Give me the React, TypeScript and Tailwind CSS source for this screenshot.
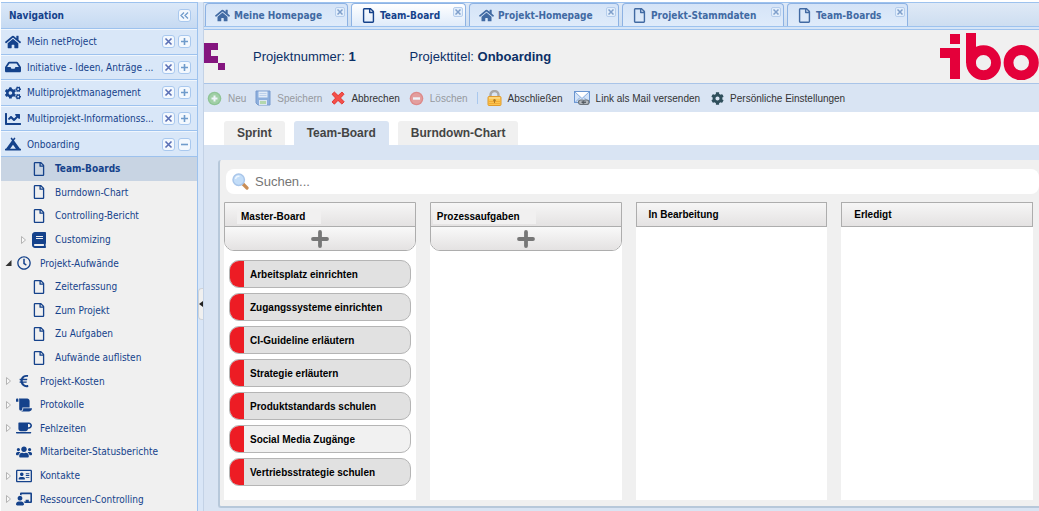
import React from 'react';
import {
  FaHome,
  FaInbox,
  FaCogs,
  FaChartLine,
  FaCampground,
  FaRegFile,
  FaBook,
  FaRegClock,
  FaEuroSign,
  FaScroll,
  FaCoffee,
  FaUsers,
  FaRegAddressCard,
  FaChalkboardTeacher,
  FaCog,
} from 'react-icons/fa';
import clsx from 'clsx';

const sections = [
  { label: 'Mein netProject', icon: FaHome, open: false },
  { label: 'Initiative - Ideen, Anträge ...', icon: FaInbox, open: false },
  { label: 'Multiprojektmanagement', icon: FaCogs, open: false },
  { label: 'Multiprojekt-Informationss...', icon: FaChartLine, open: false },
  { label: 'Onboarding', icon: FaCampground, open: true },
];

const tree = [
  { label: 'Team-Boards', icon: FaRegFile, level: 2, arrow: '' },
  { label: 'Burndown-Chart', icon: FaRegFile, level: 2, arrow: '' },
  { label: 'Controlling-Bericht', icon: FaRegFile, level: 2, arrow: '' },
  { label: 'Customizing', icon: FaBook, level: 2, arrow: 'closed' },
  { label: 'Projekt-Aufwände', icon: FaRegClock, level: 1, arrow: 'open' },
  { label: 'Zeiterfassung', icon: FaRegFile, level: 2, arrow: '' },
  { label: 'Zum Projekt', icon: FaRegFile, level: 2, arrow: '' },
  { label: 'Zu Aufgaben', icon: FaRegFile, level: 2, arrow: '' },
  { label: 'Aufwände auflisten', icon: FaRegFile, level: 2, arrow: '' },
  { label: 'Projekt-Kosten', icon: FaEuroSign, level: 1, arrow: 'closed' },
  { label: 'Protokolle', icon: FaScroll, level: 1, arrow: 'closed' },
  { label: 'Fehlzeiten', icon: FaCoffee, level: 1, arrow: 'closed' },
  { label: 'Mitarbeiter-Statusberichte', icon: FaUsers, level: 1, arrow: '' },
  { label: 'Kontakte', icon: FaRegAddressCard, level: 1, arrow: 'closed' },
  { label: 'Ressourcen-Controlling', icon: FaChalkboardTeacher, level: 1, arrow: 'closed' },
];

const pageTabs = [
  { label: 'Meine Homepage', icon: FaHome, width: 'w-[143px]' },
  { label: 'Team-Board', icon: FaRegFile, width: 'w-[115px]' },
  { label: 'Projekt-Homepage', icon: FaHome, width: 'w-[150px]' },
  { label: 'Projekt-Stammdaten', icon: FaRegFile, width: 'w-[162px]' },
  { label: 'Team-Boards', icon: FaRegFile, width: 'w-[121px]' },
];

const cards = [
  'Arbeitsplatz einrichten',
  'Zugangssysteme einrichten',
  'CI-Guideline erläutern',
  'Strategie erläutern',
  'Produktstandards schulen',
  'Social Media Zugänge',
  'Vertriebsstrategie schulen',
];

const columns = [
  { title: 'Master-Board', canAdd: true, inset: 'pl-3', cards },
  { title: 'Prozessaufgaben', canAdd: true, inset: 'pl-0.5', cards: [] },
  { title: 'In Bearbeitung', canAdd: false, inset: '', cards: [] },
  { title: 'Erledigt', canAdd: false, inset: '', cards: [] },
];

function NeuIcon() {
  return (
    <svg width="15" height="15" viewBox="0 0 15 15" className="opacity-60">
      <circle cx="7.5" cy="7.5" r="6.8" fill="#5fb05a" />
      <circle cx="7.5" cy="7.5" r="5.4" fill="#7cc474" />
      <path d="M7.5 4.5v6M4.5 7.5h6" stroke="#fff" strokeWidth="2" />
    </svg>
  );
}

function SpeichernIcon() {
  return (
    <svg width="16" height="16" viewBox="0 0 16 16" className="opacity-60">
      <path d="M1 1h14v14H3l-2-2z" fill="#5c8cd0" stroke="#3b6db5" />
      <path d="M3.5 1.5h9v6h-9z" fill="#e9f1fb" />
      <path d="M4.5 3.5h7M4.5 5.5h7" stroke="#a9c3e6" />
      <path d="M4 10h8v5H4z" fill="#dfe8f3" />
      <path d="M5 11h6v3H5z" fill="#9ccf7f" />
    </svg>
  );
}

function AbbrechenIcon() {
  return (
    <svg width="14" height="14" viewBox="0 0 14 14">
      <path
        d="M1 3.2 3.4 1l3.7 3.6L11 1l2 2.2L9.5 7l3.7 3.8-2.3 2.3L7 9.4l-3.6 3.8L1 11l3.5-3.9z"
        fill="#f4504a"
        stroke="#e0241f"
        strokeWidth="0.8"
        strokeLinejoin="round"
      />
    </svg>
  );
}

function LoeschenIcon() {
  return (
    <svg width="15" height="15" viewBox="0 0 15 15" className="opacity-60">
      <circle cx="7.5" cy="7.5" r="6.8" fill="#e04f45" />
      <circle cx="7.5" cy="7.5" r="5.4" fill="#ea7166" />
      <path d="M4 7.5h7" stroke="#fff" strokeWidth="2.4" />
    </svg>
  );
}

function LockIcon() {
  return (
    <svg width="15" height="16" viewBox="0 0 15 16">
      <path d="M3.5 8V5a4 4 0 0 1 8 0v3" fill="none" stroke="#a8a8a8" strokeWidth="2.4" />
      <rect x="1" y="6.5" width="13" height="9" rx="1" fill="#fbc550" stroke="#e09a2b" />
      <path d="M2 8h11" stroke="#fde6a6" />
      <path d="M2 11.5h11M2 13.5h11" stroke="#f3ab35" />
      <circle cx="7.5" cy="10.2" r="1.2" fill="#b07a25" />
      <path d="M7.5 10v3" stroke="#b07a25" />
    </svg>
  );
}

function MailIcon() {
  return (
    <svg width="16" height="16" viewBox="0 0 16 16">
      <rect x="0.5" y="1.5" width="15" height="11" fill="#d3e3f8" stroke="#6a95d0" />
      <path d="M1 2h14L8 8.5z" fill="#fff" />
      <path d="M1 2l7 6.5L15 2M1 12.5l5-5M15 12.5l-5-5" fill="none" stroke="#86abdd" />
      <rect x="4.5" y="10" width="6" height="4.5" rx="2.2" fill="#b4b9be" stroke="#6d757c" strokeWidth="1.2" />
      <rect x="9" y="10" width="6" height="4.5" rx="2.2" fill="#b4b9be" stroke="#6d757c" strokeWidth="1.2" />
      <path d="M7.5 12.2H12" stroke="#454c53" strokeWidth="1.2" />
    </svg>
  );
}

function SearchIcon() {
  return (
    <svg width="17" height="17" viewBox="0 0 17 17" className="shrink-0">
      <path d="M10.5 10.5l4.500 4.500" stroke="#c98d55" strokeWidth="3.2" strokeLinecap="round" />
      <circle cx="6.7" cy="6.7" r="5.7" fill="#c3ddf8" stroke="#a9c6ea" strokeWidth="1.5" />
      <path d="M3.5 6a3.500 3.500 0 0 1 4-2.700" fill="none" stroke="#eef6fe" strokeWidth="1.3" />
    </svg>
  );
}

function PlusIcon() {
  return (
    <svg width="18" height="18" viewBox="0 0 18 18">
      <path d="M9 2v14M2 9h14" stroke="#777" strokeWidth="3.8" strokeLinecap="round" />
    </svg>
  );
}

function IboLogo() {
  return (
    <svg width="99" height="47" viewBox="0 0 99 47" role="img" aria-label="ibo" className="shrink-0">
      <path d="M10 1h10v10H10zM0 15h20v31H10V25H0zM26 0h10v30H26z" fill="#e4003a" />
      <circle cx="43.5" cy="29.7" r="12.5" fill="none" stroke="#e4003a" strokeWidth="9.8" />
      <circle cx="81.2" cy="29.7" r="12.7" fill="none" stroke="#e4003a" strokeWidth="9.8" />
    </svg>
  );
}

function ProjectLogo() {
  return (
    <svg width="21" height="27" viewBox="0 0 21 27" className="shrink-0">
      <path d="M0 0h14v7H7v6h7v7H0zM14 20h7v7h-7z" fill="#84157f" />
    </svg>
  );
}

function TreeArrow({ state }: { state: string }) {
  return (
    <svg width="8" height="10" viewBox="0 0 8 10" className="shrink-0">
      {state === 'closed' && <path d="M2.5 1.5v7l4-3.5z" fill="#f8f8f8" stroke="#b4b4b4" />}
      {state === 'open' && <path d="M7.5 2v6h-6z" fill="#333" />}
    </svg>
  );
}

function ToolButton({ label, kind }: { label: string; kind: string }) {
  return (
    <button
      aria-label={label}
      className={clsx(
        'flex h-[13px] w-[13px] shrink-0 items-center justify-center rounded-[3px] border border-[#a9c8ee] bg-[#f3f8fe]',
        kind === 'close' ? 'text-[#5a6fb5]' : 'text-[#6f9bcb]'
      )}
    >
      <svg width="9" height="9" viewBox="0 0 9 9" fill="none" stroke="currentColor" strokeWidth="1.6">
        {kind === 'close' && <path d="M1.5 1.5l6 6M7.5 1.5l-6 6" />}
        {kind === 'plus' && <path d="M1 4.5h7M4.5 1v7" />}
        {kind === 'minus' && <path d="M1 4.5h7" />}
        {kind === 'collapse' && <path d="M4 1.5l-3 3 3 3M8 1.5l-3 3 3 3" strokeWidth="1.3" />}
      </svg>
    </button>
  );
}

function Sidebar() {
  const [active, setActive] = React.useState('Team-Boards');

  return (
    <aside className="flex w-[197px] shrink-0 flex-col border-r border-[#9dc2ee] bg-[#f0f0f0] font-['DejaVu_Sans_Condensed','Noto_Sans',sans-serif] text-[10px] text-[#15428b]">
      <div className="flex h-[27px] items-center justify-between border-y border-[#9dc2ee] bg-linear-to-b from-[#dbe8f8] to-[#c6daf2] pr-1.5 pl-2">
        <h2 className="font-bold">Navigation</h2>
        <ToolButton label="Navigation einklappen" kind="collapse" />
      </div>
      <div className="grid h-32 auto-rows-fr grid-cols-1">
        {sections.map((section) => (
          <div
            key={section.label}
            className="flex items-center gap-[3px] border-t border-b border-t-[#f0f6fd] border-b-[#9dc2ee] bg-[#d9e7f8] pr-1.5 pl-1"
          >
            <section.icon size={16} className="shrink-0" />
            <span className="min-w-0 flex-1 pl-[3px] whitespace-nowrap">{section.label}</span>
            <ToolButton label="Schließen" kind="close" />
            <ToolButton label={section.open ? 'Zuklappen' : 'Aufklappen'} kind={section.open ? 'minus' : 'plus'} />
          </div>
        ))}
      </div>
      <nav className="grid h-[354px] auto-rows-fr">
        {tree.map((item) => (
          <button
            key={item.label}
            onClick={() => setActive(item.label)}
            className={clsx(
              'flex items-center gap-1 text-left',
              item.level === 2 ? 'pl-[18px]' : 'pl-[3px]',
              active === item.label && 'bg-[#c8d4e3] font-bold'
            )}
          >
            <TreeArrow state={item.arrow} />
            <span className="flex w-4 shrink-0 justify-center">
              <item.icon size={[FaRegFile, FaEuroSign, FaRegClock].includes(item.icon) ? 14 : 16} />
            </span>
            <span className="pl-1">{item.label}</span>
          </button>
        ))}
      </nav>
    </aside>
  );
}

function PageTabs() {
  const [active, setActive] = React.useState('Team-Board');

  return (
    <div className="border-t border-b border-[#9dc2ee] bg-linear-to-b from-[#dfe9f6] to-[#cbdcf0]">
      <div className="flex h-6 items-end gap-[3px] border-b border-[#9dc2ee] pl-px">
        {pageTabs.map((tab) => (
          <div
            key={tab.label}
            className={clsx(
              'flex h-[23px] items-start justify-between rounded-t border border-b-0 border-[#8db2e3] pr-0.5 pl-[9px]',
              tab.width,
              active === tab.label
                ? 'bg-linear-to-b from-white to-[#dfebfa] text-[#15428b]'
                : 'bg-linear-to-b from-[#d5e4f7] to-[#dfebfa] text-[#416aa3]'
            )}
          >
            <button
              onClick={() => setActive(tab.label)}
              className="flex h-[22px] items-center gap-1 font-['DejaVu_Sans_Condensed','Noto_Sans',sans-serif] text-[10px] font-bold whitespace-nowrap"
            >
              <tab.icon size={15} />
              {tab.label}
            </button>
            <button
              aria-label={`${tab.label} schließen`}
              className="mt-[3px] flex h-2.5 w-2.5 items-center justify-center rounded-[2px] border border-[#b5cdec] bg-[#e3eefb]"
            >
              <svg width="6" height="6" viewBox="0 0 6 6" stroke="#7f9fcb" strokeWidth="1.5">
                <path d="M0.5 0.5l5 5M5.5 0.5l-5 5" />
              </svg>
            </button>
          </div>
        ))}
      </div>
      <div className="h-0.5 bg-[#d6e5f7]" />
    </div>
  );
}

function ToolbarItem({
  icon,
  label,
  disabled,
}: {
  icon: React.ReactNode;
  label: string;
  disabled?: boolean;
}) {
  return (
    <button
      disabled={disabled}
      className={clsx('flex items-center gap-1.5 whitespace-nowrap', disabled ? 'text-[#96999e]' : 'text-[#333]')}
    >
      {icon}
      {label}
    </button>
  );
}

function Toolbar() {
  return (
    <div className="flex h-[29px] items-center gap-[9px] border-t border-[#a9c4e8] bg-[#d9e4f3] pl-[3px] text-[10px]">
      <div className="flex items-center gap-[9px]">
        <ToolbarItem icon={<NeuIcon />} label="Neu" disabled />
        <ToolbarItem icon={<SpeichernIcon />} label="Speichern" disabled />
        <ToolbarItem icon={<AbbrechenIcon />} label="Abbrechen" />
        <ToolbarItem icon={<LoeschenIcon />} label="Löschen" disabled />
      </div>
      <span className="h-3 w-px bg-[#a9c8ee]" />
      <div className="flex items-center gap-[11px]">
        <ToolbarItem icon={<LockIcon />} label="Abschließen" />
        <ToolbarItem icon={<MailIcon />} label="Link als Mail versenden" />
        <ToolbarItem icon={<FaCog size={13} className="text-[#2f4f5c]" />} label="Persönliche Einstellungen" />
      </div>
    </div>
  );
}

function ViewTabs() {
  const [view, setView] = React.useState('Team-Board');

  return (
    <div className="flex h-[33px] items-end gap-[9px] bg-white pl-5">
      {['Sprint', 'Team-Board', 'Burndown-Chart'].map((name) => (
        <button
          key={name}
          onClick={() => setView(name)}
          className={clsx(
            'h-6 rounded-t-[3px] px-[13px] text-[12px] font-bold text-[#444]',
            view === name ? 'bg-[#d9e4f3]' : 'bg-[#f0f0f0]'
          )}
        >
          {name}
        </button>
      ))}
    </div>
  );
}

function Board() {
  return (
    <section className="flex flex-1 flex-col rounded-l-[3px] border-b-2 border-l-2 border-[#b7c8da] bg-[#f0f0f0] pt-[9px] pb-1.5 pl-1">
      <label className="ml-0.5 flex h-[25px] items-center gap-1.5 rounded-lg bg-white pl-1.5">
        <SearchIcon />
        <input
          type="text"
          placeholder="Suchen..."
          aria-label="Suchen"
          className="min-w-0 flex-1 text-[13px] text-[#444] outline-none placeholder:text-[#757575]"
        />
      </label>
      <div className="mt-2 mr-1.5 grid flex-1 grid-cols-4 gap-3.5 text-[10px] font-bold text-black">
        {columns.map((column) => (
          <div key={column.title} className="bg-white">
            {column.canAdd ? (
              <div className="overflow-hidden rounded-b-[10px] border border-[#adadad]">
                <h3 className="flex h-6 items-end border-b border-[#adadad] bg-linear-to-b from-[#f6f6f6] to-[#e4e2e2]">
                  <span className={clsx('flex h-5 items-center', column.inset)}>
                    <span className="bg-[#f1f0f0] pr-4 pl-1">{column.title}</span>
                  </span>
                </h3>
                <button
                  aria-label={`Aufgabe zu ${column.title} hinzufügen`}
                  className="flex h-[23px] w-full items-center justify-center bg-linear-to-b from-[#f9f9f9] to-[#e4e2e2]"
                >
                  <PlusIcon />
                </button>
              </div>
            ) : (
              <h3 className="flex h-[25px] items-center border border-[#adadad] bg-linear-to-b from-[#f6f6f6] to-[#e4e2e2] pl-3">
                {column.title}
              </h3>
            )}
            <ul className="flex flex-col gap-[5px] px-[5px] pt-[9px]">
              {column.cards.map((card) => (
                <li
                  key={card}
                  className={clsx(
                    'flex h-7 items-center overflow-hidden rounded-[10px] border border-[#b5b5b5]',
                    card === 'Social Media Zugänge' ? 'bg-[#f1f1f1]' : 'bg-[#e1e1e1]'
                  )}
                >
                  <span className="mr-1.5 h-full w-3.5 bg-[#ed1c24]" />
                  {card}
                </li>
              ))}
            </ul>
          </div>
        ))}
      </div>
    </section>
  );
}

export default function App() {
  return (
    <div className="flex min-h-screen bg-[#d9e4f3] font-['Liberation_Sans',Arial,sans-serif]">
      <div className="flex border-t-2 border-l border-white">
        <Sidebar />
        <div className="flex w-1.5 items-center border-r border-[#c3d2e6] bg-[#d9e6f7] pt-[95px]">
          <button
            aria-label="Seitenleiste ausblenden"
            className="flex h-8 w-full items-center justify-center rounded-l border border-r-0 border-[#cfd3d8] bg-[#f0f0f0]"
          >
            <svg width="4" height="6" viewBox="0 0 4 6">
              <path d="M4 0v6L0 3z" fill="#222" />
            </svg>
          </button>
        </div>
      </div>
      <main className="flex min-w-0 flex-1 flex-col border-t-2 border-white">
        <PageTabs />
        <header className="flex h-[53px] items-center bg-[#f0f0f0] text-[13px] text-[#0b2f66]">
          <ProjectLogo />
          <p className="ml-7">
            Projektnummer: <b>1</b>
          </p>
          <p className="ml-[54px] flex-1">
            Projekttitel: <b>Onboarding</b>
          </p>
          <IboLogo />
        </header>
        <Toolbar />
        <ViewTabs />
        <div className="flex flex-1 flex-col pt-[15px] pb-[3px] pl-3.5">
          <Board />
        </div>
      </main>
    </div>
  );
}
